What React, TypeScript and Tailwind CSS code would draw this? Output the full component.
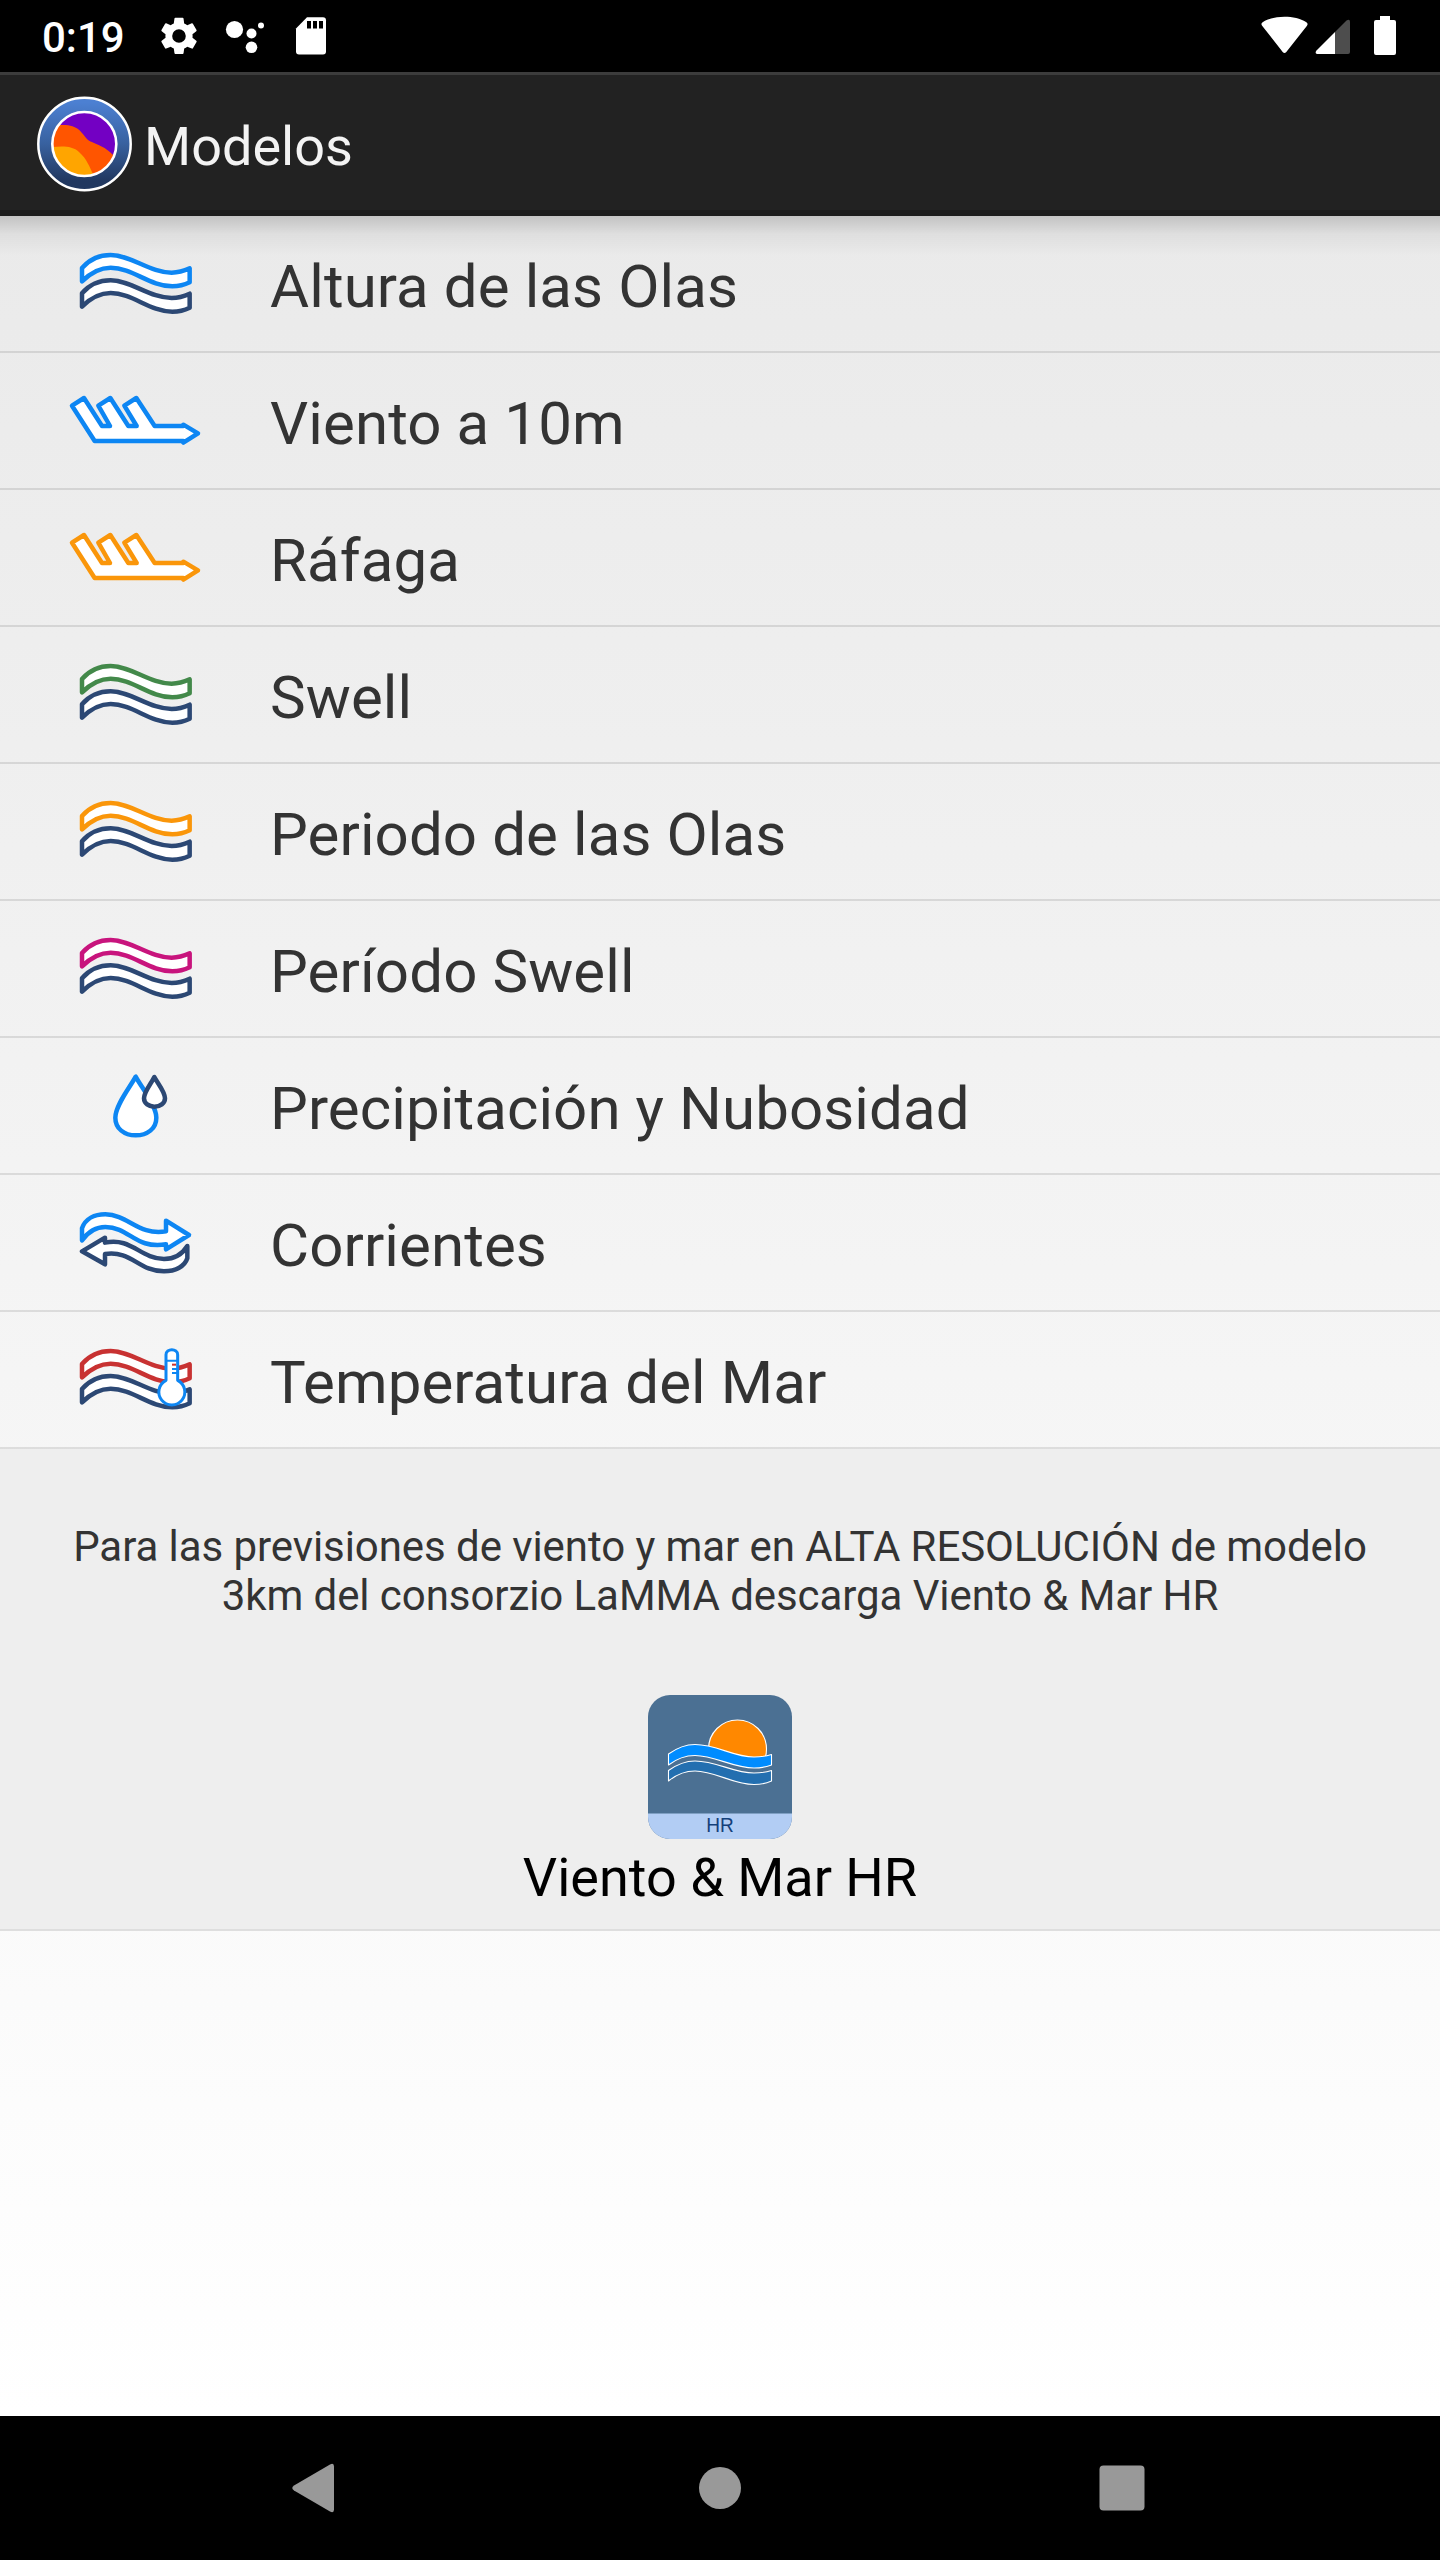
import type { ReactNode } from "react";

const NAVY = "#2c4874";
const BLUE = "#0d86f3";

const WAVE =
  "M66 114 C92 84 122 75 152 75 C215 76 270 128 335 128 C356 128 374 122 389 115 L389 157 C371 166 354 169 337 169 C268 168 218 114 152 113 C118 113 92 128 66 154 Z";

type IconProps = { top: number; children: ReactNode };

const RowIcon = ({ top, children }: IconProps) => (
  <svg
    width="150"
    height="135"
    viewBox={`0 ${-top * 3} 450 405`}
    fill="#fff"
    strokeWidth="13.5"
    strokeLinejoin="round"
    strokeLinecap="round"
    className="shrink-0"
  >
    {children}
  </svg>
);

const Waves = ({ color }: { color: string }) => (
  <>
    <path d={WAVE} stroke={color} />
    <path d={WAVE} stroke={NAVY} transform="translate(0 76)" />
  </>
);

const WavesIcon = ({ color }: { color: string }) => (
  <RowIcon top={14}>
    <Waves color={color} />
  </RowIcon>
);

const WindIcon = ({ color }: { color: string }) => (
  <RowIcon top={17}>
    <path
      d="M104 213 L36 107 L72 84 L126 168 L150 168 L115 107 L151 84 L205 168 L230 168 L193 107 L229 84 L284 168 L370 168 L370 164 L414 190 L370 218 L370 213 Z"
      stroke={color}
    />
  </RowIcon>
);

const RainIcon = () => (
  <RowIcon top={12}>
    <path
      d="M227 80 C210 112 166 166 166 203 C166 236 193 256 227 256 C262 256 289 236 289 203 C289 166 244 112 227 80 Z"
      stroke={BLUE}
    />
    <path
      d="M283 81 C274 100 252 125 252 145 C252 160 267 170 283 170 C300 170 315 160 315 145 C315 125 293 100 283 81 Z"
      stroke={NAVY}
    />
  </RowIcon>
);

const CurrentsIcon = () => (
  <RowIcon top={15}>
    <path
      d="M66 115 C76 86 104 73 136 73 C205 74 235 138 318 124 L318 92 L387 135 L318 178 L318 163 C225 178 210 112 136 111 C106 111 84 126 66 151 Z"
      stroke={BLUE}
    />
    <path
      d="M382 168 C366 194 344 207 312 207 C240 206 215 141 135 158 L135 143 L66 184 L135 223 L135 192 C215 180 235 244 312 244 C348 244 374 229 382 205 Z"
      stroke={NAVY}
    />
  </RowIcon>
);

const SeaTempIcon = () => (
  <RowIcon top={18}>
    <g transform="translate(0 -12)">
      <path d={WAVE} stroke="#c83232" />
      <path d={WAVE} stroke={NAVY} transform="translate(0 75)" />
    </g>
    <path
      d="M318 151 L318 74 C318 54 353 54 353 74 L353 151 A39 39 0 1 1 318 151 Z"
      stroke={BLUE}
      strokeWidth="9"
    />
    <path d="M320 92 H352 M336 117 H352 M336 129 H352" stroke={BLUE} strokeWidth="6" strokeLinecap="butt" />
    <path d="M336 104 H348" stroke="#c83232" strokeWidth="6" strokeLinecap="butt" />
  </RowIcon>
);

const models = [
  { label: "Altura de las Olas", icon: <WavesIcon color={BLUE} /> },
  { label: "Viento a 10m", icon: <WindIcon color={BLUE} /> },
  { label: "Ráfaga", icon: <WindIcon color="#fa960a" /> },
  { label: "Swell", icon: <WavesIcon color="#43894a" /> },
  { label: "Periodo de las Olas", icon: <WavesIcon color="#fa960a" /> },
  { label: "Período Swell", icon: <WavesIcon color="#c8147d" /> },
  { label: "Precipitación y Nubosidad", icon: <RainIcon /> },
  { label: "Corrientes", icon: <CurrentsIcon /> },
  { label: "Temperatura del Mar", icon: <SeaTempIcon /> },
];

const StatusBar = () => (
  <div className="flex h-[72px] items-center justify-between bg-black">
    <div className="flex items-center">
      <span className="ml-[42px] w-[109px] pt-1 text-[42px] leading-none font-medium text-white">0:19</span>
      {/* settings, assistant, sd card */}
      <svg width="190" height="72" viewBox="0 0 190 72" fill="#fff">
        <g transform="translate(5.3 13.3) scale(1.89)">
          <path d="M19.14 12.94c.04-.3.06-.61.06-.94s-.02-.64-.07-.94l2.03-1.58a.49.49 0 0 0 .12-.61l-1.92-3.32a.49.49 0 0 0-.59-.22l-2.39.96a7 7 0 0 0-1.62-.94l-.36-2.54a.48.48 0 0 0-.48-.41h-3.84a.48.48 0 0 0-.47.41l-.36 2.54a7.3 7.3 0 0 0-1.62.94l-2.39-.96a.48.48 0 0 0-.59.22L2.74 8.87a.48.48 0 0 0 .12.61l2.03 1.58a6 6 0 0 0 0 1.88l-2.03 1.58a.49.49 0 0 0-.12.61l1.92 3.32c.12.22.37.29.59.22l2.39-.96c.5.38 1.03.7 1.62.94l.36 2.54c.05.24.24.41.48.41h3.84c.24 0 .44-.17.47-.41l.36-2.54a7.3 7.3 0 0 0 1.62-.94l2.39.96c.22.08.47 0 .59-.22l1.92-3.32a.48.48 0 0 0-.12-.61zM12 15.6a3.6 3.6 0 1 1 0-7.2 3.6 3.6 0 0 1 0 7.2z" />
        </g>
        <circle cx="83.5" cy="29.5" r="8.6" />
        <circle cx="100.5" cy="33.5" r="5" />
        <circle cx="100.5" cy="47.3" r="5.8" />
        <circle cx="110" cy="25.5" r="3" />
        <path d="M156 17.3 H172 Q175 17.3 175 20.3 V51.5 Q175 54.5 172 54.5 H148 Q145 54.5 145 51.5 V28.5 Z" />
        <path d="M156 21 h4 v7.5 h-4z M162 21 h4 v7.5 h-4z M168 21 h4 v7.5 h-4z" fill="#000" />
      </svg>
    </div>
    {/* wifi, signal, battery */}
    <svg width="220" height="72" viewBox="0 0 220 72" fill="#fff">
      <path d="M42.3 26 C40.8 24.2 41.5 23 43 22 C54 15 75 15 86 22 C87.5 23 88.2 24.2 86.8 26 L66.3 52 Q64.5 54.2 62.7 52 Z" />
      <path d="M97 54 Q94.5 53 96.5 50.5 L115 32 V54 Z" />
      <path d="M115 32 L126.5 20.5 Q130 18.5 130 22 V52 Q130 54 128 54 H115 Z" fill="#4d4d4d" />
      <path d="M160 16 H170 V20 H174 Q176 20 176 22 V53 Q176 55 174 55 H156 Q154 55 154 53 V22 Q154 20 156 20 H160 Z" />
    </svg>
  </div>
);

const Logo = () => (
  <svg width="96" height="96" viewBox="0 0 96 96" className="mt-0.5 ml-9">
    <defs>
      <linearGradient id="ring" x1="0" y1="0" x2="0" y2="1">
        <stop offset="0.05" stopColor="#4c80d2" />
        <stop offset="0.5" stopColor="#38619f" />
        <stop offset="0.9" stopColor="#213860" />
      </linearGradient>
      <clipPath id="disc">
        <circle cx="48" cy="48" r="32" />
      </clipPath>
    </defs>
    <circle cx="48.5" cy="48" r="46.2" fill="url(#ring)" stroke="#fff" strokeWidth="2.5" />
    <g clipPath="url(#disc)">
      <path d="M0 0 H96 V96 H0 Z" fill="#7300c3" />
      <path d="M0 34 L24 29 C42 28 45 36 51 43 C56 48 68 48 79 61 L79 96 H0 Z" fill="#ff5500" />
      <path d="M0 52 L17 51 C27 50 37 50 43 56 C51 63 53 70 58 80 L58 96 H0 Z" fill="#ffa500" />
    </g>
    <circle cx="48.3" cy="48" r="32" fill="none" stroke="#fff" strokeWidth="2.6" />
  </svg>
);

const HrAppIcon = () => (
  <svg width="144" height="144" viewBox="0 0 144 144">
    <defs>
      <clipPath id="app">
        <rect width="144" height="144" rx="22" />
      </clipPath>
    </defs>
    <g clipPath="url(#app)">
      <rect width="144" height="144" fill="#4b7093" />
      <rect y="118.5" width="144" height="26" fill="#b2cdf4" />
    </g>
    <g stroke="#fff" strokeWidth="1.1" strokeLinejoin="round">
      <circle cx="89.5" cy="54" r="29" fill="#ff8800" />
      {/* hides the part of the sun below the waterline */}
      <path
        d="M20.5 59 C31 51.5 39 49.5 47 49.5 C69 49.5 85 62 106 62 C113 62 119 61 123.5 59.5 V89 H20.5 Z"
        fill="#4b7093"
        stroke="none"
      />
      <path
        d="M20.5 59 C31 51.5 39 49.5 47 49.5 C69 49.5 85 62 106 62 C113 62 119 61 123.5 59.5 V70 C118 72 112 73 106 73 C85 73 67 60.5 47 60.5 C38 60.5 29 63.5 20.5 70 Z"
        fill="#008cff"
      />
      <path
        d="M20.5 75.5 C31 68 39 66 47 66 C69 66 85 78 106 78 C113 78 119 77 123.5 75.5 V86 C118 88.5 112 89.5 106 89.5 C85 89.5 67 76 47 76 C38 76 29 79 20.5 86 Z"
        fill="#236fb0"
      />
    </g>
    <text
      x="72"
      y="137.3"
      fontSize="19.5"
      textLength="27.5"
      lengthAdjust="spacingAndGlyphs"
      textAnchor="middle"
      fill="#14407a"
      fontFamily="Liberation Sans, sans-serif"
    >
      HR
    </text>
  </svg>
);

const NavBar = () => (
  <div className="flex h-36 items-center bg-black">
    <svg width="1440" height="144" viewBox="0 0 1440 144" fill="#999">
      <path d="M294 69.5 L330 48.5 Q334 46.5 334 50.5 V93.5 Q334 97.5 330 95.5 L294 74.5 Q290.5 72 294 69.5 Z" />
      <circle cx="720" cy="72" r="21" />
      <rect x="1099.5" y="49.5" width="45" height="45" rx="4" />
    </svg>
  </div>
);

const App = () => {
  return (
    <div className="flex h-[2560px] w-[1440px] flex-col overflow-hidden bg-white font-['Roboto',sans-serif]">
      <StatusBar />

      <header className="flex h-36 items-center border-t-[3px] border-b-[6px] border-t-[#3c3c3c] border-b-[#1c1c1c] bg-[#222]">
        <Logo />
        <h1 className="ml-3 pt-2 text-[54px] leading-none text-[#f3f3f3]">Modelos</h1>
      </header>

      <main className="relative flex-1 bg-linear-to-b from-[#eaeaea] to-white">
        {/* header shadow */}
        <div className="absolute inset-x-0 top-0 h-10 bg-linear-to-b from-black/17 via-black/5 via-45% to-transparent" />
        <ul>
          {models.map((m) => (
            <li key={m.label} className="flex h-[137px] items-center border-b-2 border-black/10 pl-[60px]">
              {m.icon}
              <span className="ml-[60px] pt-1.5 text-[60px] leading-none tracking-[0.1px] text-[#333]">{m.label}</span>
            </li>
          ))}
        </ul>

        <section className="flex h-[482px] flex-col items-center border-b-2 border-[#dedede] bg-[#eee]">
          <p className="mt-[73px] text-center text-[42px] leading-[49px] tracking-[-0.07px] text-[#333]">
            Para las previsiones de viento y mar en ALTA RESOLUCIÓN de modelo
            <br />
            3km del consorzio LaMMA descarga Viento &amp; Mar HR
          </p>
          <div className="mt-[75px] flex flex-col items-center">
            <HrAppIcon />
            <span className="mt-[7px] text-[54px] leading-[63px] text-black">Viento &amp; Mar HR</span>
          </div>
        </section>
      </main>

      <NavBar />
    </div>
  );
};

export default App;
